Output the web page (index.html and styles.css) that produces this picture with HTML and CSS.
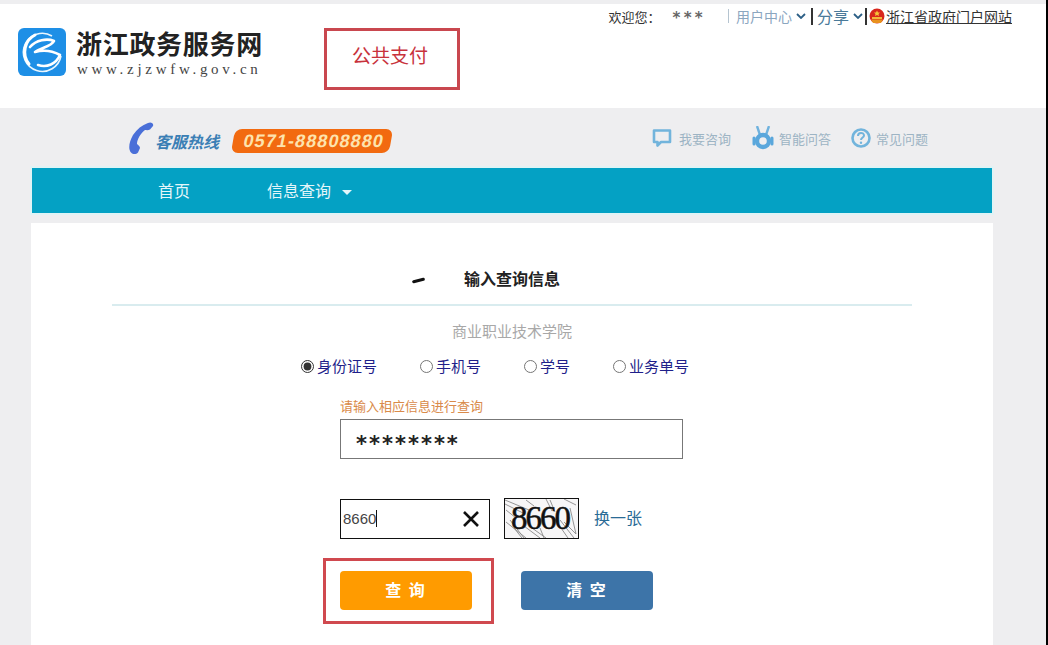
FILE: index.html
```html
<!DOCTYPE html>
<html lang="zh-CN">
<head>
<meta charset="UTF-8">
<title>浙江政务服务网</title>
<link rel="stylesheet" href="styles.css">
</head>
<body>

<header class="top">
    <a class="logo">
        <svg class="logo-mark" viewBox="0 0 48 48" width="48" height="48">
            <rect width="48" height="48" rx="6" fill="#1e8fe6"/>
            <path d="M34 8a19 19 0 1 0 9 20" fill="none" stroke="#eaf6fe" stroke-width="1.600"/>
            <path d="M17 7C7 12 3 26 11 36" fill="none" stroke="#fff" stroke-width="3" stroke-linecap="round"/>
            <path d="M12 19c6-7 17-9 24-6-2 5-13 7-19 11 7-2 16-2 25 3-4 9-13 13-22 10" fill="none" stroke="#fff" stroke-width="2.600" stroke-linecap="round" stroke-linejoin="round"/>
        </svg>
        <div class="logo-text">
            <div class="logo-name">浙江政务服务网</div>
            <div class="logo-url">www.zjzwfw.gov.cn</div>
        </div>
    </a>
    <div class="mark-box">公共支付</div>
    <div class="top-links">
        <span class="welcome">欢迎您：</span>
        <span class="user">***</span>
        <span class="thin-sep"></span>
        <span class="user-center">用户中心</span>
        <svg class="chev" viewBox="0 0 10 6" width="10" height="6"><path d="M1 1l4 4 4-4" fill="none" stroke="#2c5f86" stroke-width="1.800"/></svg>
        <span class="sep"></span>
        <span class="share">分享</span>
        <svg class="chev" viewBox="0 0 10 6" width="10" height="6"><path d="M1 1l4 4 4-4" fill="none" stroke="#2c5f86" stroke-width="1.800"/></svg>
        <span class="sep sep-tight"></span>
        <svg class="emblem" viewBox="0 0 16 16" width="16" height="16">
            <circle cx="8" cy="8" r="7.500" fill="#d8261c"/>
            <path d="M8 2.500l1 2h2l-1.500 1.500.5 2-2-1-2 1 .5-2L5 4.500h2z" fill="#f6c33a"/>
            <path d="M3 9h10v2H3z" fill="#f3b73a"/>
            <path d="M2 11.500h12l-2 3.500H4z" fill="#e8921e"/>
        </svg>
        <a class="gov-link">浙江省政府门户网站</a>
    </div>
</header>

<div class="service">
    <div class="hotline">
        <svg class="phone" viewBox="0 0 26 32" width="26" height="32">
            <path d="M20 1c3-1.500 6 .5 5 3l-3 3.500c-2 1-4 .5-5 .5-4 3-8 9-8 14 1 1 3 2 3 4l-2 4.500c-2 2-5 2-7 0C0 27 1 20 5 13 9 7 14 3 20 1z" fill="#4a6fd8"/>
        </svg>
        <span class="hotline-label">客服热线</span>
        <span class="hotline-num"><span>0571-88808880</span></span>
    </div>
    <div class="help">
        <span class="help-item help-chat">
            <svg viewBox="0 0 20 20" width="20" height="20"><path d="M2 2.500h16v11.500h-9l-3.500 3.500v-3.500h-3.500z" fill="none" stroke="#72b4dc" stroke-width="2.600" stroke-linejoin="round"/></svg>
            我要咨询
        </span>
        <span class="help-item">
            <svg viewBox="0 0 22 24" width="22" height="24"><path d="M5 0l3 9M17 0l-3 9" stroke="#6fb2de" stroke-width="2.400" fill="none"/><circle cx="11" cy="15" r="6" fill="none" stroke="#5aa7dc" stroke-width="4.400"/><path d="M2 12v6M20 12v6" stroke="#5aa7dc" stroke-width="3" stroke-linecap="round"/></svg>
            智能问答
        </span>
        <span class="help-item">
            <svg viewBox="0 0 20 20" width="20" height="20"><circle cx="10" cy="10" r="8.500" fill="none" stroke="#72b4dc" stroke-width="2.600"/><path d="M7 8c0-4 6-4 6-.5 0 2-3 2-3 4.500" fill="none" stroke="#72b4dc" stroke-width="2"/><circle cx="10" cy="14.800" r="1.200" fill="#72b4dc"/></svg>
            常见问题
        </span>
    </div>
</div>

<nav class="nav">
    <a class="nav-home">首页</a>
    <a class="nav-query">信息查询<span class="caret"></span></a>
</nav>

<main class="card">
    <h3 class="card-title"><span class="smudge"></span>输入查询信息</h3>
    <div class="school">商业职业技术学院</div>
    <div class="radios">
        <label><input type="radio" name="kind" checked>身份证号</label>
        <label><input type="radio" name="kind">手机号</label>
        <label><input type="radio" name="kind">学号</label>
        <label><input type="radio" name="kind">业务单号</label>
    </div>
    <div class="form">
        <div class="hint">请输入相应信息进行查询</div>
        <div class="id-input">********</div>
        <div class="captcha-row">
            <div class="captcha-input">
                <span class="captcha-val">8660</span>
                <svg viewBox="0 0 16 16" width="16" height="16"><path d="M1 1l14 14M15 1L1 15" stroke="#111" stroke-width="2.600"/></svg>
            </div>
            <div class="captcha-img">
                <svg viewBox="0 0 75 41" width="75" height="41">
                    <g stroke="#8a8a8a" stroke-width="0.900" fill="none">
                        <path d="M1 2l24 10M1 6l20 10M2 24l20 16M6 22l14 18M10 30l8 10M20 28l16 12M28 30l14 10M22 2l8 6M42 1l6 12M46 2l5 12M60 1l12 6M50 20l14 20M56 22l14 18M60 24l12 12M66 10l6 26M2 12l10 8M36 30l4 10"/>
                    </g>
                </svg>
                <span>8660</span>
            </div>
            <a class="refresh">换一张</a>
        </div>
        <div class="buttons">
            <div class="submit-wrap">
                <button class="btn btn-query">查 询</button>
                <div class="submit-mark"></div>
            </div>
            <button class="btn btn-clear">清 空</button>
        </div>
    </div>
</main>

</body>
</html>
```

FILE: styles.css
```css
* {
    box-sizing: border-box;
}
html, body {
    height: 100%;
}
body {
    margin: 0;
    overflow: hidden;
    border-right: 2px solid #000;
    background-color: #eeeef0;
    font-family: "Noto Sans CJK SC", "Liberation Sans", sans-serif;
    color: #333;
}

/* header */
.top {
    display: flex;
    height: 104px;
    margin-top: 4px;
    padding: 24px 34px 0 18px;
    background-color: #fff;
}
.logo {
    display: flex;
    align-items: flex-start;
    gap: 10px;
    width: 306px;
}
.logo-mark {
    flex: none;
}
.logo-text {
    margin-top: -3px;
}
.logo-name {
    font-size: 26px;
    line-height: 36px;
    font-weight: 700;
    letter-spacing: .7px;
    color: #222;
    white-space: nowrap;
}
.logo-url {
    padding-left: 1px;
    font-family: "Liberation Serif", serif;
    font-size: 15px;
    line-height: 16px;
    letter-spacing: 3.7px;
    color: #444;
    white-space: nowrap;
}
.mark-box {
    width: 136px;
    height: 62px;
    border: 3px solid #c9474f;
    padding-left: 25px;
    font-size: 19px;
    line-height: 47px;
    color: #c8323c;
}
.top-links {
    display: flex;
    align-items: center;
    height: 26px;
    margin: -25px 0 0 auto;
    white-space: nowrap;
}
.welcome {
    font-size: 13px;
}
.user {
    margin-left: 12px;
    padding-top: 3px;
    font-family: "DejaVu Sans", sans-serif;
    font-size: 15px;
    line-height: 20px;
    font-weight: 700;
    letter-spacing: 3.3px;
    color: #666;
}
.thin-sep {
    width: 1px;
    height: 14px;
    margin: 0 7px 0 22px;
    background-color: #b5c4d0;
}
.user-center {
    font-size: 14px;
    color: #8ba6bf;
}
.chev {
    margin-left: 4px;
}
.sep {
    width: 2px;
    height: 17px;
    margin: 0 4px 0 5px;
    background-color: #333;
}
.sep-tight {
    margin: 0 2px;
}
.share {
    font-size: 16px;
    color: #4a7a9a;
}
.emblem {
    margin-right: 1px;
}
.gov-link {
    font-size: 14px;
    text-decoration: underline;
    color: #333;
}

/* hotline row */
.service {
    display: flex;
    justify-content: space-between;
    align-items: center;
    height: 60px;
    padding: 0 118px 0 128px;
}
.hotline {
    display: flex;
    align-items: center;
}
.hotline-label {
    margin: 6px 0 0 1px;
    font-size: 16px;
    font-weight: 700;
    font-style: italic;
    color: #3b7fb5;
}
.hotline-num {
    display: block;
    width: 158px;
    height: 24px;
    margin: 5px 0 0 14px;
    padding-left: 4px;
    border-radius: 7px;
    background-color: #f26a10;
    transform: skewX(-10deg);
    text-align: center;
}
.hotline-num span {
    display: block;
    font-family: "Liberation Sans", sans-serif;
    font-size: 18px;
    line-height: 24px;
    font-weight: 700;
    letter-spacing: 1.1px;
    color: #fde3ad;
    transform: skewX(-2deg);
}
.help {
    display: flex;
    align-items: center;
    gap: 20px;
}
.help-item {
    display: flex;
    align-items: center;
    gap: 5px;
    font-size: 13px;
    color: #9db4c4;
}
.help-chat {
    margin-right: 1px;
}
.help-chat svg {
    margin-right: 2px;
}

/* nav */
.nav {
    display: flex;
    align-items: center;
    width: 960px;
    height: 45px;
    margin-left: 32px;
    padding: 0 0 2px 126px;
    background-color: #04a1c4;
    box-shadow: 0 0 0 2px #e0f3f5;
    color: #e4f6fa;
    font-size: 16px;
}
.nav-home {
    margin-right: 77px;
}
.caret {
    display: inline-block;
    margin-left: 11px;
    vertical-align: middle;
    border-top: 5px solid #e4f6fa;
    border-left: 5px solid transparent;
    border-right: 5px solid transparent;
}

/* card */
.card {
    width: 962px;
    height: 422px;
    margin: 10px 0 0 31px;
    padding-top: 43px;
    background-color: #fff;
}
.card-title {
    position: relative;
    width: 800px;
    height: 40px;
    margin: 0 auto;
    border-bottom: 2px solid #d9ecef;
    padding-left: 352px;
    font-size: 16px;
    line-height: 24px;
    font-weight: 700;
    color: #222;
}
.smudge {
    position: absolute;
    left: 300px;
    top: 13px;
    width: 13px;
    height: 3px;
    border-radius: 2px;
    background-color: #111;
    transform: rotate(-14deg);
}
.school {
    margin-top: 13px;
    text-align: center;
    font-size: 15px;
    line-height: 24px;
    color: #a8a8a8;
}
.radios {
    display: flex;
    gap: 43px;
    height: 24px;
    margin: 11px 0 0 270px;
    font-size: 15px;
    line-height: 24px;
    color: #1f1f8a;
}
.radios label {
    display: flex;
    align-items: center;
}
.radios input {
    width: 13px;
    height: 13px;
    margin: 0 3px 0 0;
    accent-color: #333;
}
.form {
    width: 343px;
    margin: 18px 0 0 309px;
}
.hint {
    font-size: 13px;
    line-height: 20px;
    color: #d98a4a;
}
.id-input {
    height: 40px;
    margin-top: 3px;
    border: 1px solid #777;
    padding-left: 15px;
    font-family: "DejaVu Sans", sans-serif;
    font-size: 21px;
    line-height: 48px;
    font-weight: 700;
    letter-spacing: 2px;
    color: #222;
}
.captcha-row {
    display: flex;
    align-items: center;
    margin-top: 39px;
}
.captcha-input {
    display: flex;
    justify-content: space-between;
    align-items: center;
    width: 150px;
    height: 40px;
    border: 1px solid #111;
    padding: 0 10px 0 2px;
}
.captcha-val {
    border-right: 1px solid #111;
    font-family: "Liberation Sans", sans-serif;
    font-size: 15px;
    color: #444;
}
.captcha-img {
    position: relative;
    width: 75px;
    height: 41px;
    margin-left: 14px;
    padding-right: 3px;
    border: 1px solid #111;
    background-color: #f7f6f7;
    overflow: hidden;
    text-align: center;
    font-family: "Liberation Serif", serif;
    font-size: 33px;
    line-height: 39px;
    letter-spacing: -2px;
    -webkit-text-stroke: .5px #111;
    color: #111;
}
.captcha-img svg {
    position: absolute;
    left: -1px;
    top: -1px;
}
.captcha-img span {
    position: relative;
}
.refresh {
    margin: 0 0 3px 15px;
    font-size: 16px;
    color: #2a6b96;
}
.buttons {
    display: flex;
    gap: 49px;
    margin-top: 32px;
}
.submit-wrap {
    position: relative;
}
.btn {
    display: block;
    width: 132px;
    height: 39px;
    border: none;
    border-radius: 4px;
    padding: 0 0 3px;
    font-family: inherit;
    font-size: 16px;
    font-weight: 700;
    letter-spacing: 2px;
    color: #fff;
}
.btn-query {
    background-color: #ff9b00;
}
.btn-clear {
    background-color: #3d74a8;
}
.submit-mark {
    position: absolute;
    left: -17px;
    top: -13px;
    width: 171px;
    height: 66px;
    border: 3px solid #d0494f;
}
```
